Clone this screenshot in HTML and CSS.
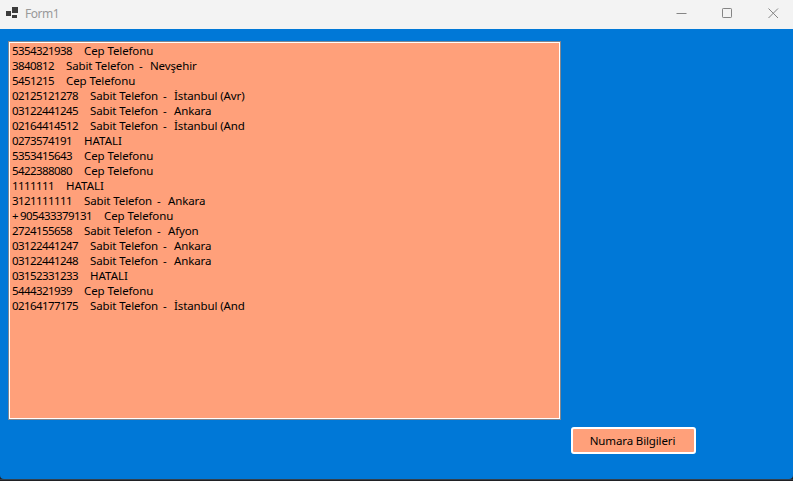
FILE: index.html
```html
<!DOCTYPE html>
<html lang="tr">
<head>
<meta charset="utf-8">
<title>Form1</title>
<link rel="stylesheet" href="styles.css">
</head>
<body>
<div class="window">
<header class="titlebar">
<svg class="app-icon" width="13" height="12" viewBox="0 0 13 12"><path d="M6 0h6v6H6zM0 4h5v5H0zM6 8h5v3H6z"/></svg>
<span class="title">Form1</span>
<svg class="control" width="11" height="11" viewBox="0 0 11 11"><path d="M.5 5.5h10"/></svg>
<svg class="control" width="11" height="11" viewBox="0 0 11 11"><rect x=".5" y=".5" width="9" height="9" rx=".7"/></svg>
<svg class="control" width="11" height="11" viewBox="0 0 11 11"><path d="M.5.5l9.5 9.5M10 .5L.5 10"/></svg>
</header>
<main class="client">
<ul class="list">
<li><span class="num">5354321938</span><span>Cep Telefonu</span></li>
<li><span class="num">3840812</span><span class="type">Sabit Telefon</span><span class="dash">-</span><span>Nevşehir</span></li>
<li><span class="num">5451215</span><span>Cep Telefonu</span></li>
<li><span class="num">02125121278</span><span class="type">Sabit Telefon</span><span class="dash">-</span><span>İstanbul (Avr)</span></li>
<li><span class="num">03122441245</span><span class="type">Sabit Telefon</span><span class="dash">-</span><span>Ankara</span></li>
<li><span class="num">02164414512</span><span class="type">Sabit Telefon</span><span class="dash">-</span><span>İstanbul (And</span></li>
<li><span class="num">0273574191</span><span class="error">HATALI</span></li>
<li><span class="num">5353415643</span><span>Cep Telefonu</span></li>
<li><span class="num">5422388080</span><span>Cep Telefonu</span></li>
<li><span class="num">1111111</span><span class="error">HATALI</span></li>
<li><span class="num">3121111111</span><span class="type">Sabit Telefon</span><span class="dash">-</span><span>Ankara</span></li>
<li><span class="num"><span class="plus">+</span>905433379131</span><span>Cep Telefonu</span></li>
<li><span class="num">2724155658</span><span class="type">Sabit Telefon</span><span class="dash">-</span><span>Afyon</span></li>
<li><span class="num">03122441247</span><span class="type">Sabit Telefon</span><span class="dash">-</span><span>Ankara</span></li>
<li><span class="num">03122441248</span><span class="type">Sabit Telefon</span><span class="dash">-</span><span>Ankara</span></li>
<li><span class="num">03152331233</span><span class="error">HATALI</span></li>
<li><span class="num">5444321939</span><span>Cep Telefonu</span></li>
<li><span class="num">02164177175</span><span class="type">Sabit Telefon</span><span class="dash">-</span><span>İstanbul (And</span></li>
</ul>
<button class="button">Numara Bilgileri</button>
</main>
<div class="edge"></div>
</div>
</body>
</html>
```
FILE: styles.css
```css
* { box-sizing: border-box; }
body { margin: 0; background: #202124; font: 11.5px/15px "Noto Sans", sans-serif; color: #000; overflow: hidden; }
.window { width: 793px; height: 481px; display: flex; flex-direction: column; }
.titlebar { height: 29px; flex: none; display: flex; align-items: center; background: #f3f3f3; padding: 0 14px 3px 6px; }
.app-icon { fill: #3c3c3c; }
.title { margin-left: 6px; margin-right: auto; color: #999; font-size: 12px; letter-spacing: -.45px; }
.control { fill: none; stroke: #858585; stroke-width: 1; }
.control + .control { margin-left: 35px; }
.client { height: 450px; flex: none; display: flex; align-items: flex-start; background: #0078d7; padding: 12px 0 0 8px; border-radius: 0 0 4px 4px; }
.list { list-style: none; margin: 0; padding: 1px 3px; width: 553px; height: 379px; background: #ffa07a; border: 1px solid #828790; box-shadow: inset 0 0 0 1px #fff; }
.list li { display: flex; height: 15px; white-space: pre; letter-spacing: -.13px; word-spacing: .2px; }
.num { margin-right: 12px; letter-spacing: -.578px; }
.plus { display: inline-block; width: 8px; }
.type { width: 67px; }
.dash { width: 17px; padding-left: 6px; }
.error { letter-spacing: 0; }
.button { margin: 386px 0 0 10px; width: 125px; height: 27px; padding: 0 2px 0 0; border: 2px solid #fff; border-radius: 3px; background: #ffa07a; color: #000; font: 11.5px/15px "Noto Sans", sans-serif; letter-spacing: -.13px; }
.edge { height: 2px; background: #202124; border-top: 1px solid #34404c; }
```
